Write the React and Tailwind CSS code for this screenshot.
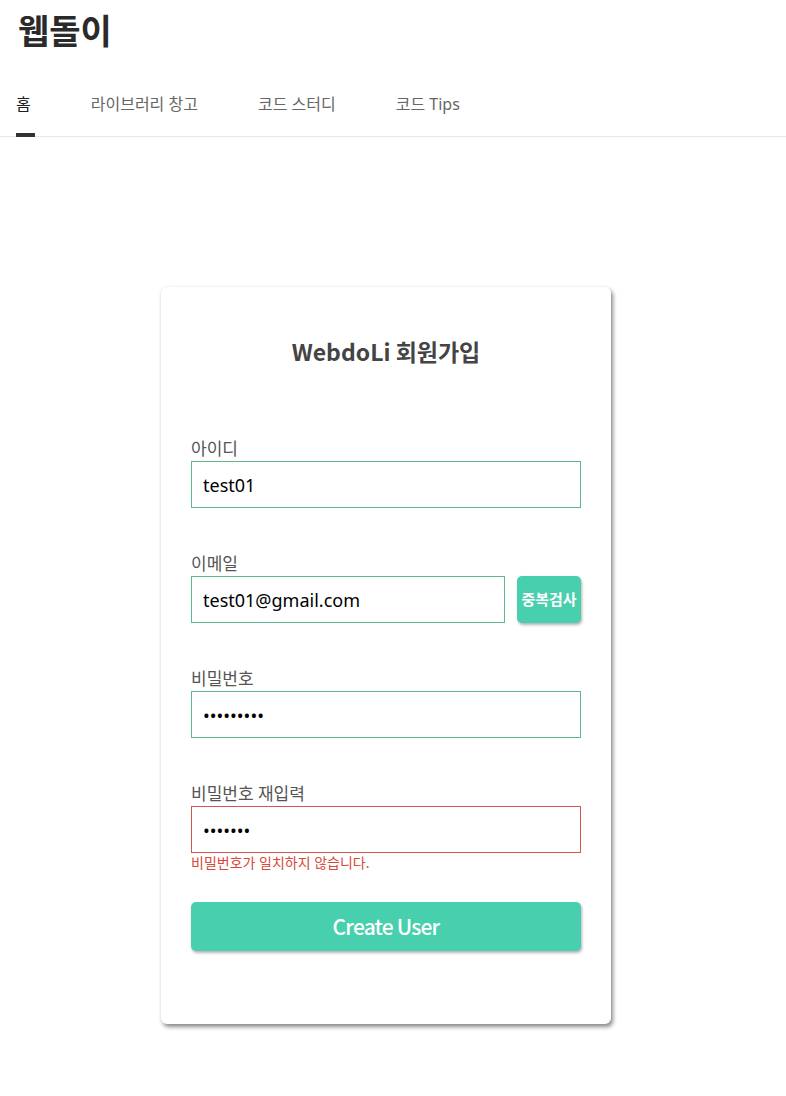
import { useState } from 'react';

function Field({ label, children, error }) {
    return (
        <div className="flex flex-col">
            <label className="text-[17px] leading-[24px] text-[#555]">{label}</label>
            {children}
            {error && <p className="text-[14px] leading-[20px] text-[#d6483a]">{error}</p>}
        </div>
    );
}

export default function App() {
    const [form, setForm] = useState({
        id: 'test01',
        email: 'test01@gmail.com',
        password: '123456789',
        confirm: '1234567',
    });

    const tabs = ['홈', '라이브러리 창고', '코드 스터디', '코드 Tips'];

    const inputClass =
        'block w-full h-[47px] px-[11px] border border-[#5dba8b] text-[18px] text-black outline-none bg-white';

    return (
        <div className="min-h-screen bg-white font-['Noto_Sans','Noto_Sans_CJK_KR',sans-serif]">
            {/* 헤더 */}
            <header className="border-b border-[#e8e8e8]">
                <div className="px-4">
                    <h1 className="text-[34px] font-bold text-[#2a2a2a] leading-[46px] pt-[8px] pl-[2px]">웹돌이</h1>
                    <nav className="flex gap-[60px] mt-[38px]">
                        {tabs.map((t, i) => (
                            <a
                                key={t}
                                href="#"
                                className={`relative pb-[20px] text-[16px] leading-[24px] ${i === 0 ? 'text-[#222]' : 'text-[#666]'}`}
                            >
                                {t}
                                {i === 0 && (
                                    <span className="absolute left-0 -bottom-px w-[19px] h-[4px] bg-[#333]" />
                                )}
                            </a>
                        ))}
                    </nav>
                </div>
            </header>

            {/* 회원가입 카드 */}
            <div className="flex justify-center pr-[14px] pt-[150px] pb-[72px]">
                <form
                    onSubmit={(e) => e.preventDefault()}
                    className="w-[450px] bg-white rounded-[6px] shadow-[2px_3px_4px_rgba(0,0,0,0.45),0_0_4px_rgba(0,0,0,0.06)] px-[30px] pt-[48px] pb-[73px]"
                >
                    <h2 className="text-center text-[23px] leading-[32px] font-bold text-[#444] font-['Noto_Sans_CJK_KR',sans-serif]">
                        WebdoLi 회원가입
                    </h2>

                    <div className="mt-[70px] flex flex-col gap-[44px]">
                        <Field label="아이디">
                            <input
                                className={inputClass}
                                value={form.id}
                                onChange={(e) => setForm({ ...form, id: e.target.value })}
                            />
                        </Field>

                        <Field label="이메일">
                            <div className="flex gap-[12px]">
                                <input
                                    className="block flex-1 min-w-0 h-[47px] px-[11px] border border-[#5dba8b] text-[18px] text-black outline-none bg-white"
                                    value={form.email}
                                    onChange={(e) => setForm({ ...form, email: e.target.value })}
                                />
                                <button
                                    type="button"
                                    className="w-[64px] h-[47px] rounded-[5px] bg-[#48cfad] text-white text-[15px] font-semibold shadow-[1px_2px_3px_rgba(0,0,0,0.3)]"
                                >
                                    중복검사
                                </button>
                            </div>
                        </Field>

                        <Field label="비밀번호">
                            <input
                                type="password"
                                className={inputClass}
                                value={form.password}
                                onChange={(e) => setForm({ ...form, password: e.target.value })}
                            />
                        </Field>

                        <Field label="비밀번호 재입력" error="비밀번호가 일치하지 않습니다.">
                            <input
                                type="password"
                                className="block w-full h-[47px] px-[11px] border border-[#d2574b] text-[18px] text-black outline-none bg-white"
                                value={form.confirm}
                                onChange={(e) => setForm({ ...form, confirm: e.target.value })}
                            />
                        </Field>
                    </div>

                    <button
                        type="submit"
                        className="mt-[29px] w-full h-[49px] rounded-[5px] bg-[#48cfad] text-white text-[21px] font-medium tracking-[-0.8px] shadow-[1px_2px_3px_rgba(0,0,0,0.3)] font-['Noto_Sans_CJK_KR',sans-serif]"
                    >
                        Create User
                    </button>
                </form>
            </div>
        </div>
    );
}
